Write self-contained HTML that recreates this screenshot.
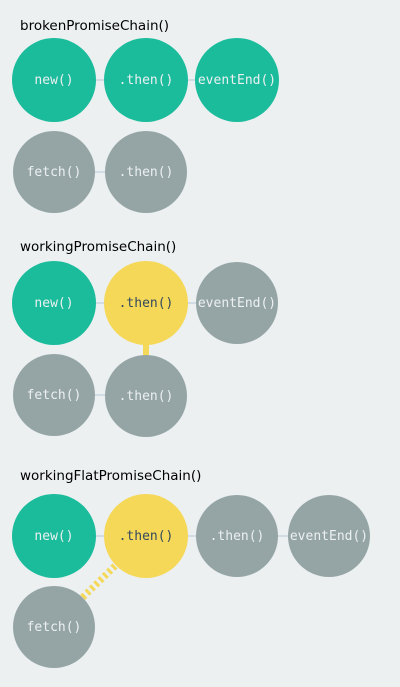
<!DOCTYPE html>
<html><head><meta charset="utf-8"><style>
html,body{margin:0;padding:0;background:#ecf0f1;}
svg{display:block}
.t{font-family:"DejaVu Sans","Liberation Sans",sans-serif;font-size:13.5px;fill:#000}
.m{font-family:"DejaVu Sans Mono","Liberation Mono",monospace;font-size:13px;text-anchor:middle;dominant-baseline:central}
.w{fill:#ecf0f1}.d{fill:#34495e}
</style></head><body>
<svg width="400" height="687" viewBox="0 0 400 687">
<rect width="400" height="687" fill="#ecf0f1"/>
<g stroke="#c8d6e0" stroke-width="1.5">
<line x1="54" y1="80" x2="237" y2="80"/>
<line x1="54" y1="172" x2="146" y2="172"/>
<line x1="54" y1="303" x2="237" y2="303"/>
<line x1="54" y1="395" x2="146" y2="395"/>
<line x1="54" y1="536" x2="329" y2="536"/>
</g>
<line x1="146" y1="344" x2="146" y2="356" stroke="#f5d858" stroke-width="6"/>
<line x1="115" y1="566" x2="81" y2="599" stroke="#f5d858" stroke-width="7" stroke-dasharray="3,3"/>
<text class="t" x="20" y="30">brokenPromiseChain()</text>
<circle cx="54" cy="80" r="42" fill="#1abc9c"/>
<circle cx="146" cy="80" r="42" fill="#1abc9c"/>
<circle cx="237" cy="80" r="42" fill="#1abc9c"/>
<circle cx="54" cy="172" r="41" fill="#95a5a6"/>
<circle cx="146" cy="172" r="41" fill="#95a5a6"/>
<text class="m w" x="54" y="80.5">new()</text>
<text class="m w" x="146" y="80.5">.then()</text>
<text class="m w" x="237" y="80.5">eventEnd()</text>
<text class="m w" x="54" y="172.5">fetch()</text>
<text class="m w" x="146" y="172.5">.then()</text>

<text class="t" x="20" y="251">workingPromiseChain()</text>
<circle cx="54" cy="303" r="42" fill="#1abc9c"/>
<circle cx="146" cy="303" r="42" fill="#f5d858"/>
<circle cx="237" cy="303" r="41" fill="#95a5a6"/>
<circle cx="54" cy="395" r="41" fill="#95a5a6"/>
<circle cx="146" cy="396" r="41" fill="#95a5a6"/>
<text class="m w" x="54" y="303.5">new()</text>
<text class="m d" x="146" y="303.5">.then()</text>
<text class="m w" x="237" y="303.5">eventEnd()</text>
<text class="m w" x="54" y="395.5">fetch()</text>
<text class="m w" x="146" y="396.5">.then()</text>

<text class="t" x="20" y="480">workingFlatPromiseChain()</text>
<circle cx="54" cy="536" r="42" fill="#1abc9c"/>
<circle cx="146" cy="536" r="42" fill="#f5d858"/>
<circle cx="237" cy="536" r="41" fill="#95a5a6"/>
<circle cx="329" cy="536" r="41" fill="#95a5a6"/>
<circle cx="54" cy="627" r="41" fill="#95a5a6"/>
<text class="m w" x="54" y="536.5">new()</text>
<text class="m d" x="146" y="536.5">.then()</text>
<text class="m w" x="237" y="536.5">.then()</text>
<text class="m w" x="329" y="536.5">eventEnd()</text>
<text class="m w" x="54" y="627.5">fetch()</text>
</svg>
</body></html>
